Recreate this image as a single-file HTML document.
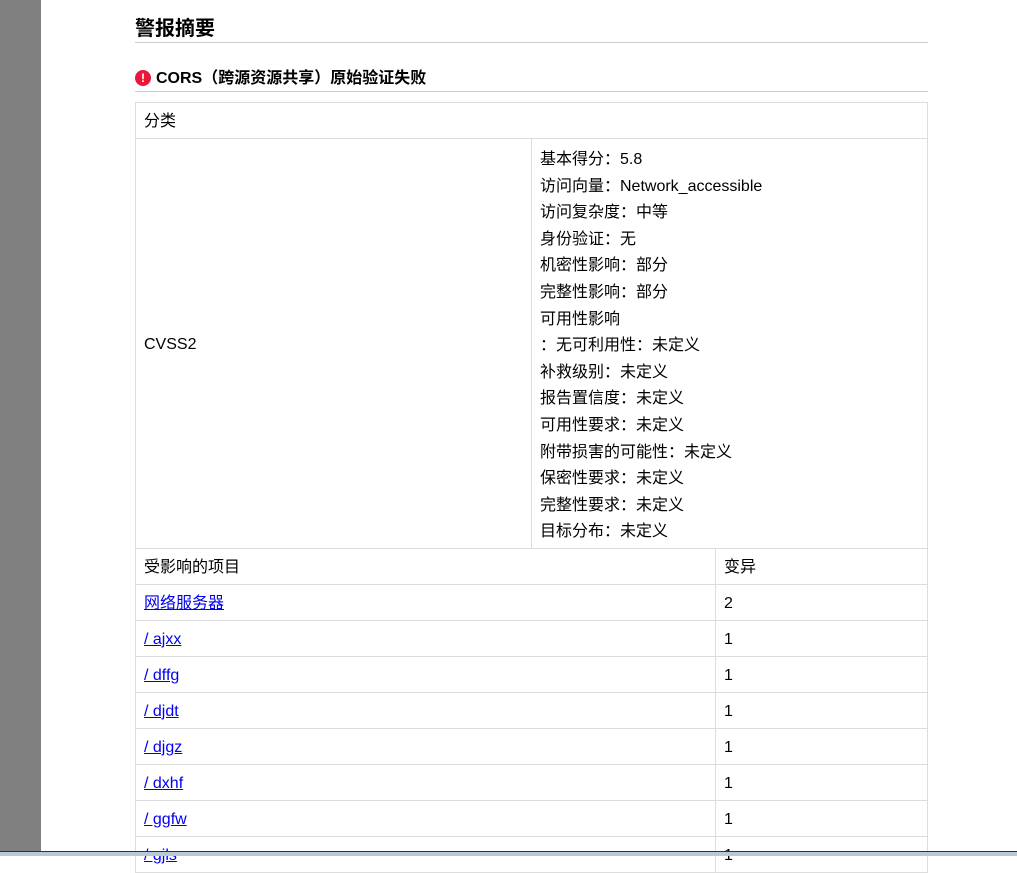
<!DOCTYPE html>
<html><head><meta charset="utf-8"><style>
*{margin:0;padding:0;box-sizing:border-box}
body{width:1017px;height:856px;overflow:hidden;background:#fff;font-family:"Liberation Sans","Noto Sans CJK SC",sans-serif;font-size:16px;color:#000;position:relative}
.gray{position:absolute;left:0;top:0;width:41px;height:856px;background:#808080}
.h1{position:absolute;left:135px;top:14px;width:793px;height:29px;border-bottom:1px solid #ccc;font-size:20px;font-weight:bold;line-height:30px}
.h2{position:absolute;left:135px;top:66px;width:793px;height:26px;border-bottom:1px solid #ccc;font-size:16px;font-weight:bold;line-height:26px}
.h2 .ic{display:inline-block;width:16px;height:16px;border-radius:50%;background:#e8173b;color:#fff;font-size:12px;text-align:center;line-height:16px;vertical-align:1px;margin-right:5px}
table{position:absolute;left:135px;width:793px;border-collapse:collapse}
td{border:1px solid #ddd;padding:3px 8px 0;vertical-align:middle;line-height:20px}
a{color:#00e;text-decoration:underline}
.t2 td{height:36px}
.taskbar{position:absolute;left:0;top:851px;width:1017px;height:5px;background:#b8c8d4;border-top:1px solid #333;z-index:5}
</style></head><body>
<div class="gray"></div>
<div class="h1">警报摘要</div>
<div class="h2"><span class="ic">!</span>CORS（跨源资源共享）原始验证失败</div>
<table style="top:102px">
<tr><td colspan="2" style="height:36px">分类</td></tr>
<tr><td style="width:396px;height:410px">CVSS2</td><td style="line-height:26.6px;padding-top:8px;padding-bottom:2px">基本得分：5.8<br>访问向量：Network_accessible<br>访问复杂度：中等<br>身份验证：无<br>机密性影响：部分<br>完整性影响：部分<br>可用性影响<br>：无可利用性：未定义<br>补救级别：未定义<br>报告置信度：未定义<br>可用性要求：未定义<br>附带损害的可能性：未定义<br>保密性要求：未定义<br>完整性要求：未定义<br>目标分布：未定义</td></tr>
</table>
<table class="t2" style="top:548px">
<tr><td style="width:580px">受影响的项目</td><td>变异</td></tr>
<tr><td><a>网络服务器</a></td><td>2</td></tr>
<tr><td><a>/ ajxx</a></td><td>1</td></tr>
<tr><td><a>/ dffg</a></td><td>1</td></tr>
<tr><td><a>/ djdt</a></td><td>1</td></tr>
<tr><td><a>/ djgz</a></td><td>1</td></tr>
<tr><td><a>/ dxhf</a></td><td>1</td></tr>
<tr><td><a>/ ggfw</a></td><td>1</td></tr>
<tr><td><a>/ gjls</a></td><td>1</td></tr>
</table>
<div class="taskbar"></div>
</body></html>
